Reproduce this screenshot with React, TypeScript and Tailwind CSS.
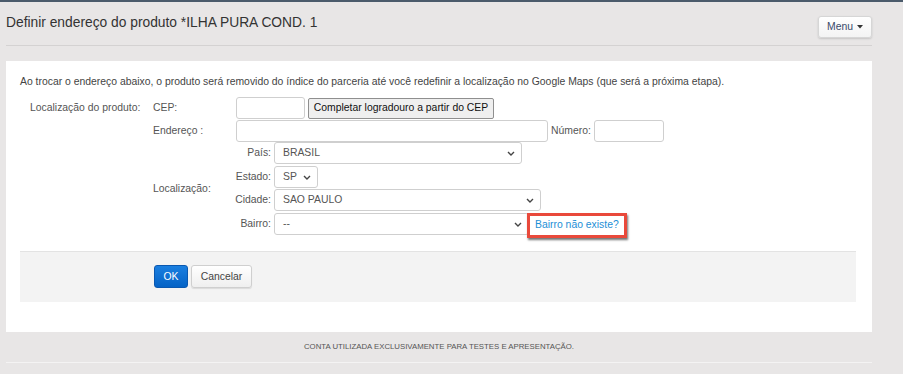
import type { ReactNode } from "react";

function Chevron() {
	return (
		<svg width="8" height="5" viewBox="0 0 8 5" className="shrink-0">
			<path d="M1 1 L4 4 L7 1" fill="none" stroke="#444" strokeWidth="1.4" />
		</svg>
	);
}

interface FakeSelectProps {
	value: string,
	width: string,
}

function FakeSelect({ value, width }: FakeSelectProps) {
	return (
		<div className={`${width} h-[22px] flex items-center justify-between pl-[8px] pr-[6px] bg-white border border-[#cfcfcf] rounded-[3px] text-[10.4px] text-[#555]`}>
			<span>{value}</span>
			<Chevron />
		</div>
	);
}

function TextInput({ width }: { width: string }) {
	return <div className={`${width} h-[22px] bg-white border border-[#cfcfcf] rounded-[3px]`} />;
}

interface SubRowProps {
	label: string,
	children: ReactNode,
	className?: string,
}

function SubRow({ label, children, className }: SubRowProps) {
	return (
		<div className={`flex items-start h-[22px] ${className ?? ""}`}>
			<span className="w-[38px] h-[22px] flex items-center justify-end whitespace-nowrap pr-[3px] text-[10.4px] text-[#555]">{label}</span>
			{children}
		</div>
	);
}

export default function App() {
	return (
		<div className="w-[903px] h-[374px] overflow-hidden bg-[#e8e6e6] border-t-2 border-[#4b5b6b] font-['Liberation_Sans',Arial,sans-serif]">
			<div className="ml-[6px] w-[866px]">
				<div className="h-[44px] flex items-start justify-between border-b border-[#d4d2d2]">
					<h1 className="mt-[12px] text-[13.8px] text-[#333] leading-[17px]">
						Definir endereço do produto *ILHA PURA COND. 1
					</h1>
					<button className="mt-[14px] h-[22px] w-[54px] flex items-center justify-center gap-[4px] bg-gradient-to-b from-white to-[#f3f3f3] border border-[#d6d6d6] rounded-[3px] shadow-[0_1px_2px_rgba(0,0,0,0.15)] text-[10.4px] text-[#394a6b]">
						Menu
						<svg width="6" height="4" viewBox="0 0 6 4">
							<path d="M0 0 L6 0 L3 3.5 Z" fill="#333" />
						</svg>
					</button>
				</div>

				<div className="mt-[15px] h-[271px] bg-white pl-[14px] pr-[16px] pt-[14px]">
					<p className="text-[10.4px] leading-[14px] text-[#444]">
						Ao trocar o endereço abaixo, o produto será removido do índice do parceria até você redefinir a localização no Google Maps (que será a próxima etapa).
					</p>

					<div className="mt-[8px] flex">
						<div className="w-[133px] pl-[10px] h-[22px] flex items-center text-[10.4px] text-[#555]">
							Localização do produto:
						</div>
						<div className="flex flex-col">
							<div className="flex items-center h-[22px]">
								<span className="w-[83px] text-[10.4px] text-[#555]">CEP:</span>
								<TextInput width="w-[69px]" />
								<button className="ml-[3px] h-[21px] w-[186px] whitespace-nowrap bg-[#efefef] border border-[#8f8f8f] rounded-[2px] text-[10.4px] text-[#111]">
									Completar logradouro a partir do CEP
								</button>
							</div>
							<div className="mt-[1px] flex items-center h-[22px]">
								<span className="w-[83px] text-[10.4px] text-[#555]">Endereço :</span>
								<TextInput width="w-[312px]" />
								<span className="ml-[3px] w-[43px] text-[10.4px] text-[#555]">Número:</span>
								<TextInput width="w-[70px]" />
							</div>
							<div className="flex">
								<div className="w-[83px] flex items-center text-[10.4px] text-[#555]">Localização:</div>
								<div className="flex flex-col">
									<SubRow label="País:">
										<FakeSelect value="BRASIL" width="w-[248px]" />
									</SubRow>
									<SubRow label="Estado:" className="mt-[2px]">
										<FakeSelect value="SP" width="w-[44px]" />
									</SubRow>
									<SubRow label="Cidade:" className="mt-[1px]">
										<FakeSelect value="SAO PAULO" width="w-[267px]" />
									</SubRow>
									<SubRow label="Bairro:" className="mt-[2px]">
										<FakeSelect value="--" width="w-[255px]" />
										<a className="ml-[-2px] block px-[5px] h-[25px] leading-[18px] border-[3px] border-[#e9493b] bg-white text-[10.4px] text-[#1d8fd6] shadow-[1px_2px_2px_rgba(0,0,0,0.55)]">
											Bairro não existe?
										</a>
									</SubRow>
								</div>
							</div>
						</div>
					</div>

					<div className="mt-[16px] h-[51px] bg-[#f3f3f3] border-t border-[#e3e3e3] pl-[134px] pt-[13px] flex items-start gap-[3px]">
						<button className="h-[23px] w-[34px] bg-gradient-to-b from-[#1a7fe0] to-[#0563c6] border border-[#0a58b0] rounded-[3px] text-[10.4px] text-white">
							OK
						</button>
						<button className="h-[23px] w-[61px] bg-gradient-to-b from-white to-[#efefef] border border-[#cfcfcf] rounded-[3px] shadow-[0_1px_1px_rgba(0,0,0,0.1)] text-[10.4px] text-[#444]">
							Cancelar
						</button>
					</div>
				</div>

				<div className="h-[30px] flex items-center justify-center text-[7.8px] text-[#555]">
					CONTA UTILIZADA EXCLUSIVAMENTE PARA TESTES E APRESENTAÇÃO.
				</div>
				<div className="border-t border-[#f4f3f3]" />
			</div>
		</div>
	);
}
